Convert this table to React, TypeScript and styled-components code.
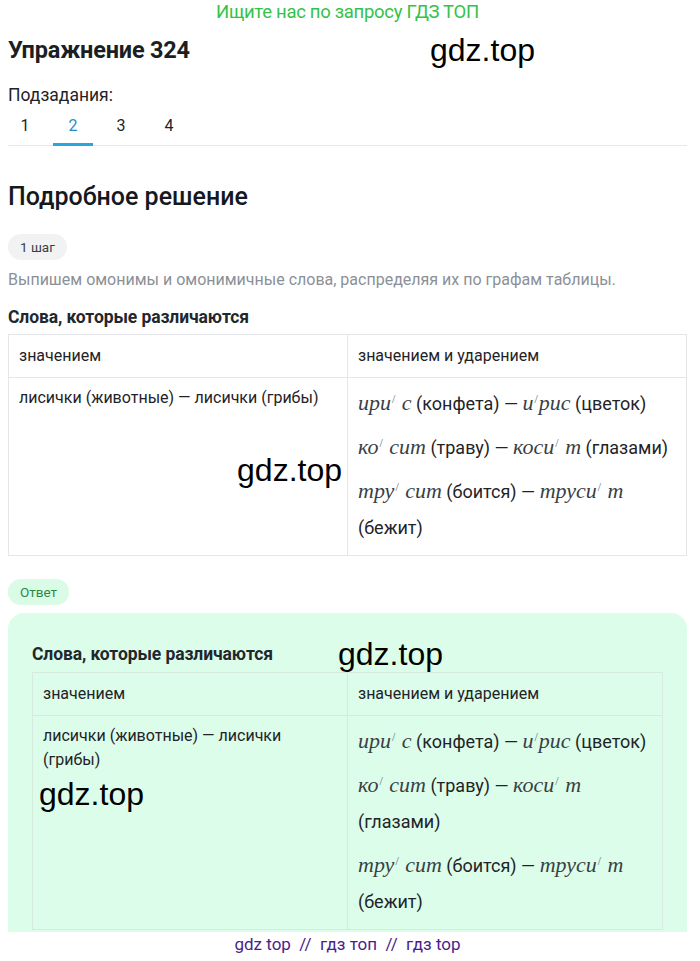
import styled, { createGlobalStyle } from "styled-components";

const GlobalStyle = createGlobalStyle`
  body {
    margin: 0;
    background: #fff;
    font-family: Roboto, "Noto Sans", sans-serif;
    color: #1f2328;
  }
`;

const Page = styled.div`
  width: 700px;
  padding: 0 13px 0 8px;
  box-sizing: border-box;
`;

const Banner = styled.div`
  height: 24px;
  line-height: 24px;
  text-align: center;
  color: #34c24a;
  font-size: 18.5px;
  letter-spacing: -0.3px;
`;

const TitleRow = styled.div`
  display: grid;
  grid-template-columns: 422px auto;
  align-items: center;
  margin-top: 7px;
  height: 38px;
`;

const Title = styled.h1`
  margin: 0;
  font-size: 23.5px;
  font-weight: 700;
  letter-spacing: -0.2px;
  color: #1b1f24;
`;

const Watermark = styled.div<{ $align?: "left" | "right" }>`
  font-family: "Liberation Sans", Arial, sans-serif;
  font-size: 32px;
  line-height: 38px;
  color: #000;
  text-align: ${(p) => p.$align ?? "left"};
`;

const SubLabel = styled.div`
  margin-top: 14px;
  font-size: 17.5px;
  line-height: 24px;
`;

const Tabs = styled.div`
  display: flex;
  gap: 8px;
  border-bottom: 1px solid #e6e8eb;
`;

const Tab = styled.div<{ $active?: boolean }>`
  width: 40px;
  padding: 7px 0 5px;
  line-height: 24px;
  font-size: 16px;
  text-align: center;
  color: ${(p) => (p.$active ? "#2a8cc4" : "#1f2328")};
  border-bottom: 3px solid ${(p) => (p.$active ? "#2aa6dc" : "transparent")};
  margin-bottom: -1px;

  &:first-child {
    margin-left: -3px;
  }
`;

const SectionTitle = styled.h2`
  margin: 35px 0 0;
  font-size: 25px;
  line-height: 32px;
  font-weight: 500;
  color: #15191e;
`;

const Pill = styled.div<{ $green?: boolean }>`
  width: fit-content;
  height: 26px;
  line-height: 26px;
  padding: 0 12px;
  border-radius: 13px;
  font-size: 13.5px;
  background: ${(p) => (p.$green ? "#dafbe6" : "#f1f2f4")};
  color: ${(p) => (p.$green ? "#2a8a47" : "#3a3f45")};
`;

const StepPill = styled(Pill)`
  margin-top: 21px;
`;

const AnswerPill = styled(Pill)`
  margin-top: 23px;
`;

const Lead = styled.p`
  margin: 8px 0 0;
  font-size: 16px;
  line-height: 24px;
  color: #8b9097;
`;

const TableTitle = styled.div`
  font-size: 17.5px;
  font-weight: 700;
  line-height: 20px;
  letter-spacing: -0.1px;
  color: #22272d;
`;

const MainTableTitle = styled(TableTitle)`
  margin-top: 15px;
`;

const Table = styled.table<{ $tint?: boolean }>`
  width: 100%;
  margin-top: ${(p) => (p.$tint ? "8px" : "7px")};
  border-collapse: collapse;
  font-size: 16px;
  color: #1f2328;

  th,
  td {
    border: 1px solid ${(p) => (p.$tint ? "#d5ebdd" : "#e4e6e9")};
    padding: 8px 10px 9px;
    text-align: left;
    vertical-align: top;
    font-weight: 400;
    line-height: 24px;
    width: 50%;
  }

  th {
    padding: 9px 10px;
  }
`;

const FormulaCell = styled.td`
  font-size: 18px;
`;

const Formula = styled.p`
  margin: 0 0 8px;
  line-height: 36px;

  &:last-child {
    margin-bottom: 0;
  }
`;

const Word = styled.span`
  font-family: "Liberation Serif", "Times New Roman", serif;
  font-style: italic;
  font-size: 22px;
  line-height: 1;
  color: #3a3f45;
`;

const Stress = styled.span`
  position: relative;
  top: -7px;
  font-family: "Liberation Serif", serif;
  font-style: normal;
  font-size: 12px;
  line-height: 1;
  color: #6b7077;
  margin: 0 1px;
`;

const MainMark = styled(Watermark)`
  margin-top: 41px;
  margin-right: -5px;
`;

const AnswerMark = styled(Watermark)`
  margin-top: 3px;
  margin-left: -4px;
`;

const AnswerBox = styled.div`
  margin-top: 8px;
  background: #dcfde9;
  border-radius: 16px 16px 0 0;
  padding: 31px 24px 2px;
`;

const AnswerHead = styled.div`
  display: grid;
  grid-template-columns: 306px auto;
  align-items: center;
  height: 20px;

  ${Watermark} {
    line-height: 20px;
  }
`;

const Footer = styled.div`
  height: 26px;
  line-height: 24px;
  text-align: center;
  color: #4a1d8c;
  font-size: 17px;
  white-space: pre;
`;

function S() {
  return <Stress>/</Stress>;
}

function Formulas() {
  return (
    <>
      <Formula>
        <Word>
          ири<S /> с
        </Word>{" "}
        (конфета) — <Word>
          и<S />рис
        </Word>{" "}
        (цветок)
      </Formula>
      <Formula>
        <Word>
          ко<S /> сит
        </Word>{" "}
        (траву) — <Word>
          коси<S /> т
        </Word>{" "}
        (глазами)
      </Formula>
      <Formula>
        <Word>
          тру<S /> сит
        </Word>{" "}
        (боится) — <Word>
          труси<S /> т
        </Word>{" "}
        (бежит)
      </Formula>
    </>
  );
}

export default function App() {
  return (
    <>
      <GlobalStyle />
      <Page>
        <Banner>Ищите нас по запросу ГДЗ ТОП</Banner>
        <TitleRow>
          <Title>Упражнение 324</Title>
          <Watermark>gdz.top</Watermark>
        </TitleRow>
        <SubLabel>Подзадания:</SubLabel>
        <Tabs>
          <Tab>1</Tab>
          <Tab $active>2</Tab>
          <Tab>3</Tab>
          <Tab>4</Tab>
        </Tabs>

        <SectionTitle>Подробное решение</SectionTitle>
        <StepPill>1 шаг</StepPill>
        <Lead>Выпишем омонимы и омонимичные слова, распределяя их по графам таблицы.</Lead>
        <MainTableTitle>Слова, которые различаются</MainTableTitle>
        <Table>
          <thead>
            <tr>
              <th>значением</th>
              <th>значением и ударением</th>
            </tr>
          </thead>
          <tbody>
            <tr>
              <td>
                лисички (животные) — лисички (грибы)
                <MainMark $align="right">gdz.top</MainMark>
              </td>
              <FormulaCell>
                <Formulas />
              </FormulaCell>
            </tr>
          </tbody>
        </Table>

        <AnswerPill $green>Ответ</AnswerPill>
        <AnswerBox>
          <AnswerHead>
            <TableTitle>Слова, которые различаются</TableTitle>
            <Watermark>gdz.top</Watermark>
          </AnswerHead>
          <Table $tint>
            <thead>
              <tr>
                <th>значением</th>
                <th>значением и ударением</th>
              </tr>
            </thead>
            <tbody>
              <tr>
                <td>
                  лисички (животные) — лисички (грибы)
                  <AnswerMark>gdz.top</AnswerMark>
                </td>
                <FormulaCell>
                  <Formulas />
                </FormulaCell>
              </tr>
            </tbody>
          </Table>
        </AnswerBox>
        <Footer>{"gdz top  //  гдз топ  //  гдз top"}</Footer>
      </Page>
    </>
  );
}
